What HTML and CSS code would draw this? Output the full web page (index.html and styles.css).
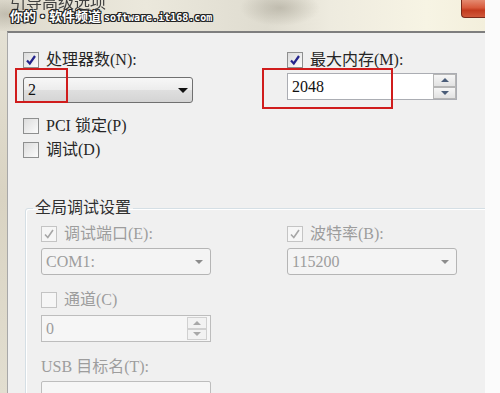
FILE: index.html
```html
<!DOCTYPE html>
<html lang="zh-CN">
<head>
    <meta charset="UTF-8">
    <meta name="viewport" content="width=device-width, initial-scale=1.0">
    <title>引导高级选项</title>
    <link rel="stylesheet" href="styles.css">
</head>
<body>

    <div class="window">
        <div class="titlebar">
            <span class="title">引导高级选项</span>
            <span class="close"></span>
        </div>

        <div class="client">
            <div class="cols">
                <div class="col">
                    <label class="check">
                        <span class="cb"><svg viewBox="0 0 12 12"><path d="M2 6.5 L4.8 9.5 L10 2"/></svg></span>
                        处理器数(N):
                    </label>
                    <div class="combo"><span>2</span><span class="arrow"></span></div>
                    <label class="check row-pci"><span class="cb"></span>PCI 锁定(P)</label>
                    <label class="check row-debug"><span class="cb"></span>调试(D)</label>
                </div>
                <div class="col">
                    <label class="check">
                        <span class="cb"><svg viewBox="0 0 12 12"><path d="M2 6.5 L4.8 9.5 L10 2"/></svg></span>
                        最大内存(M):
                    </label>
                    <div class="spin mem">
                        <span class="val">2048</span>
                        <span class="btns"><span class="up"></span><span class="down"></span></span>
                    </div>
                </div>
            </div>

            <fieldset class="group">
                <legend>全局调试设置</legend>
                <div class="gcols">
                    <div class="col">
                        <label class="check off">
                            <span class="cb"><svg viewBox="0 0 12 12"><path d="M2 6.5 L4.8 9.5 L10 2"/></svg></span>
                            调试端口(E):
                        </label>
                        <div class="combo off"><span>COM1:</span><span class="arrow"></span></div>
                        <label class="check off row-chan"><span class="cb"></span>通道(C)</label>
                        <div class="spin off chan">
                            <span class="val">0</span>
                            <span class="btns"><span class="up"></span><span class="down"></span></span>
                        </div>
                        <label class="check off row-usb">USB 目标名(T):</label>
                        <div class="field off"></div>
                    </div>
                    <div class="col">
                        <label class="check off">
                            <span class="cb"><svg viewBox="0 0 12 12"><path d="M2 6.5 L4.8 9.5 L10 2"/></svg></span>
                            波特率(B):
                        </label>
                        <div class="combo off"><span>115200</span><span class="arrow"></span></div>
                    </div>
                </div>
            </fieldset>
        </div>

        <!-- watermark and red markers lie over the dialog -->
        <div class="mark">你的·软件频道 <span class="url">software.it168.com</span></div>
        <div class="hl hl-cpu"></div>
        <div class="hl hl-mem"></div>
    </div>

</body>
</html>
```

FILE: styles.css
```css
body {
    margin: 0;
    background: #fbfbfb;
    font-family: "Liberation Serif", "Noto Sans CJK SC", serif;
    font-size: 16px;
}
.window {
    position: relative;
    width: 485px;
    height: 393px;
    overflow: hidden;
    background: linear-gradient(to bottom, #e6e3d7, #d9d3c2 50%, #e2ded0);
}
.titlebar {
    height: 31px;
    display: flex;
    justify-content: space-between;
    align-items: flex-start;
    padding-left: 10px;
    overflow: hidden;
    background:
        radial-gradient(ellipse 40px 18px at 280px 8px, rgba(150, 145, 130, 0.45), transparent),
        radial-gradient(ellipse 30px 16px at 6px 14px, rgba(150, 145, 130, 0.4), transparent),
        linear-gradient(to right, #dedacd, #ebe8dc 30%, #dfdcd0 55%, #eeebdf 68%, #f7f4e4 88%, #f3efdc);
}
.title {
    margin-top: -5px;
    line-height: 16px;
    font-size: 16px;
    color: #404040;
    filter: blur(0.6px);
}
.close {
    width: 23px;
    height: 17px;
    margin-top: -1px;
    border: 1px solid #7a2a1a;
    border-right: 0;
    border-radius: 0 0 0 4px;
    background: linear-gradient(#e48a70, #d85a3c 45%, #c23a1e 60%, #d0583a);
}
.client {
    margin-left: 7px;
    height: 360px;
    border-top: 2px solid #7e7e7e;
    border-left: 1px solid #a8a8a8;
    background: #f0f0f0;
    overflow: hidden;
}
.cols {
    display: grid;
    grid-template-columns: 264px 170px;
    padding: 19px 0 0 15px;
}
.col {
    display: flex;
    flex-direction: column;
    align-items: flex-start;
}
.check {
    display: flex;
    align-items: center;
    gap: 7px;
    height: 16px;
    line-height: 16px;
    color: #262626;
    white-space: nowrap;
}
.cb {
    width: 14px;
    height: 14px;
    border: 1px solid #8e8f8f;
    background: linear-gradient(135deg, #dcdcdc, #fbfbfb);
    display: flex;
    align-items: center;
    justify-content: center;
}
.cb svg {
    width: 12px;
    height: 12px;
    fill: none;
    stroke: #24248c;
    stroke-width: 2.2;
}
.combo {
    width: 170px;
    height: 26px;
    box-sizing: border-box;
    margin-top: 9px;
    padding: 0 4px;
    border: 1px solid #707070;
    border-radius: 3px;
    background: linear-gradient(#f7f7f7, #ececec 50%, #dfdfdf 50%, #d4d4d4);
    display: flex;
    align-items: center;
    justify-content: space-between;
    color: #111;
}
.arrow {
    border-left: 5px solid transparent;
    border-right: 5px solid transparent;
    border-top: 5px solid #111;
}
.row-pci {
    margin-top: 15px;
}
.row-debug {
    margin-top: 8px;
}
.spin {
    width: 170px;
    height: 27px;
    box-sizing: border-box;
    border: 1px solid #abadb3;
    background: #fff;
    display: flex;
}
.spin.mem {
    margin-top: 5px;
}
.val {
    flex: 1;
    padding-left: 4px;
    display: flex;
    align-items: center;
    color: #111;
}
.btns {
    width: 23px;
    display: flex;
    flex-direction: column;
}
.btns span {
    flex: 1;
    border: 1px solid #b6b6b6;
    background: linear-gradient(#f6f6f6, #e2e2e2);
    display: flex;
    align-items: center;
    justify-content: center;
}
.btns .up::after {
    content: "";
    border-left: 4px solid transparent;
    border-right: 4px solid transparent;
    border-bottom: 4px solid #4a5c78;
}
.btns .down::after {
    content: "";
    border-left: 4px solid transparent;
    border-right: 4px solid transparent;
    border-top: 4px solid #4a5c78;
}
.group {
    width: 520px;
    min-width: 0;
    margin: 41px 0 0 17px;
    padding: 9px 0 0 15px;
    border: 1px solid #d5dfe5;
    border-radius: 3px;
    box-shadow: inset 1px 1px 0 #ffffff;
}
.group legend {
    margin-left: -8px;
    padding: 0 2px;
    line-height: 18px;
    color: #303030;
}
.gcols {
    display: grid;
    grid-template-columns: 246px 170px;
}
.check.off {
    color: #9d9d9d;
}
.check.off .cb {
    border-color: #c4c4c4;
    background: #f6f6f6;
}
.check.off .cb svg {
    stroke: #a6a6a6;
    stroke-width: 1.6;
}
.combo.off {
    height: 27px;
    margin-top: 6px;
    border-color: #b5b5b5;
    background: #f4f4f4;
    color: #9d9d9d;
    padding-right: 7px;
}
.combo.off .arrow {
    border-left-width: 4px;
    border-right-width: 4px;
    border-top: 4px solid #8c8c8c;
}
.row-chan {
    margin-top: 17px;
}
.spin.off {
    margin-top: 7px;
    border-color: #bdbdbd;
    background: #f6f6f6;
}
.spin.off .val {
    color: #9d9d9d;
}
.spin.off .btns {
    width: 20px;
    padding: 1px 3px 1px 0;
}
.spin.off .btns span {
    border-color: #d0d0d0;
    background: #f2f2f2;
}
.spin.off .btns .up::after {
    border-bottom-color: #a8a8a8;
}
.spin.off .btns .down::after {
    border-top-color: #a8a8a8;
}
.row-usb {
    margin-top: 17px;
}
.field {
    width: 170px;
    height: 27px;
    box-sizing: border-box;
    margin-top: 6px;
    border: 1px solid #bdbdbd;
    border-radius: 2px;
    background: #f6f6f6;
}
.mark {
    position: absolute;
    left: 10px;
    top: 7px;
    color: #fff;
    font-family: "Noto Sans CJK SC", sans-serif;
    font-weight: bold;
    font-size: 13px;
    line-height: 17px;
    white-space: nowrap;
    text-shadow: 1px 0 0 #222, -1px 0 0 #222, 0 1px 0 #222, 0 -1px 0 #222,
        1px 1px 0 #222, -1px -1px 0 #222, 1px -1px 0 #222, -1px 1px 0 #222;
}
.mark .url {
    font-family: "DejaVu Sans Mono", monospace;
    font-size: 10px;
}
.hl {
    position: absolute;
    border: 2px solid #d01c1c;
}
.hl-cpu {
    left: 15px;
    top: 68px;
    width: 49px;
    height: 31px;
}
.hl-mem {
    left: 262px;
    top: 68px;
    width: 127px;
    height: 37px;
}
```
